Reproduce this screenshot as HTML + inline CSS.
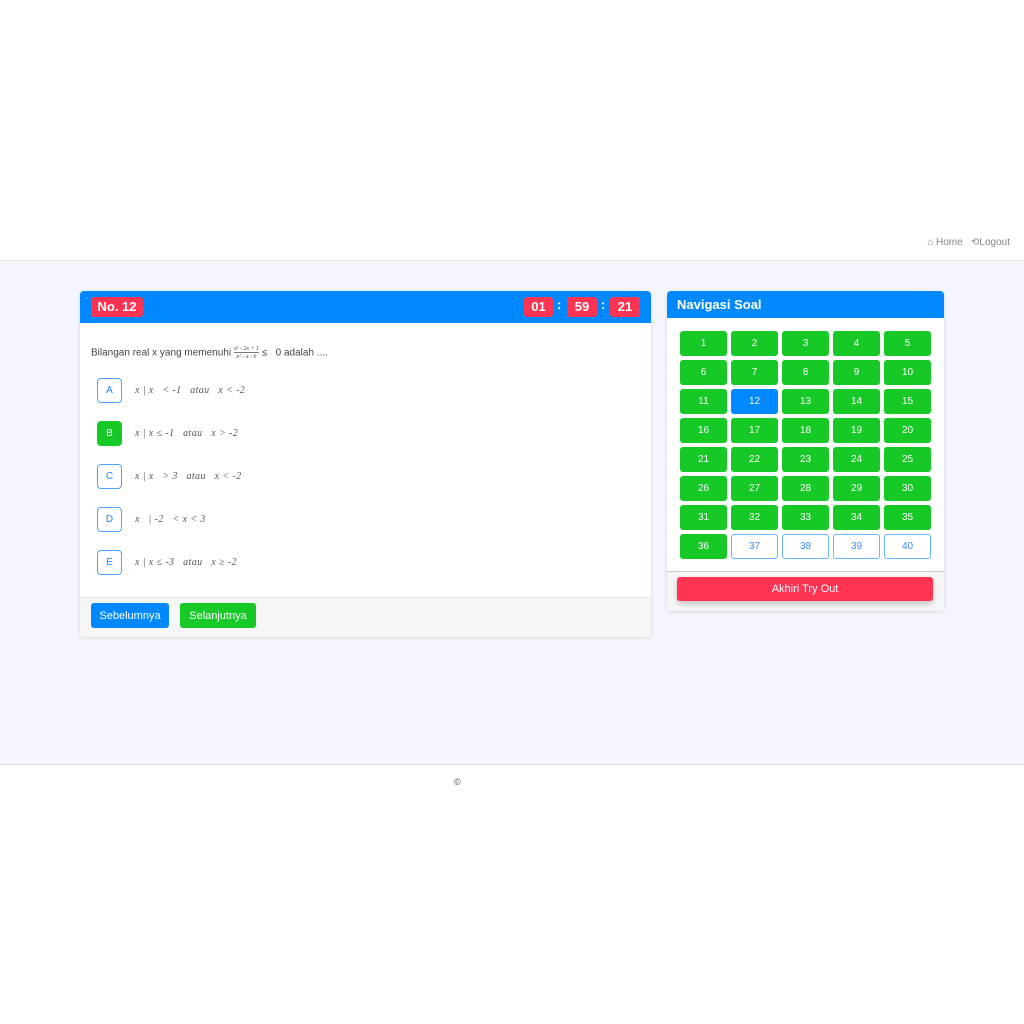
<!DOCTYPE html>
<html><head><meta charset="utf-8"><style>
*{box-sizing:border-box;margin:0;padding:0}
body{width:1024px;height:1024px;background:#fff;font-family:"Liberation Sans",sans-serif;position:relative;overflow:hidden}
.top{position:absolute;left:0;top:0;width:1024px;height:261px;background:#fff;border-bottom:1px solid #e3e3e8}
.nav{position:absolute;top:237px;right:14px;font-size:10px;color:#888}
.main{position:absolute;left:0;top:261px;width:1024px;height:504px;background:#f4f5fd;border-bottom:1px solid #dcdce0}
.card{position:absolute;background:#fff;border-radius:4px;box-shadow:0 1px 4px rgba(0,0,0,.12);overflow:hidden}
.hd{background:#0088ff;color:#fff;position:relative}
.red{background:#ff3352;color:#fff;font-weight:bold;border-radius:3px;position:absolute;text-align:center;font-size:13px}
.q{position:absolute;left:11px;top:54px;font-size:10px;color:#444}
.opt{position:absolute;left:17px;width:25px;height:25px;border:1px solid #4aa3ff;border-radius:4px;color:#1a86ff;font-size:10px;text-align:center;line-height:23px}
.ot{position:absolute;left:55px;font-family:"Liberation Serif",serif;font-style:italic;font-size:10px;color:#555;letter-spacing:.4px}
.btn{position:absolute;height:25px;border-radius:3px;color:#fff;font-size:11px;text-align:center;line-height:26px}
.g{position:absolute;width:47px;height:25px;border-radius:3px;background:#16c926;color:#fff;font-size:10px;text-align:center;line-height:26px}
.g.o{background:#fff;border:1px solid #6ab4ff;color:#3a8eff;line-height:24px}
.g.b{background:#0088ff}
</style></head><body>
<div class="top"><div class="nav">⌂ Home &nbsp; ⟲Logout</div></div>
<div class="main"></div>
<div class="card" style="left:80px;top:291px;width:571px;height:346px">
 <div class="hd" style="height:32px">
  <div class="red" style="left:11px;top:6px;width:52px;height:20px;line-height:20px">No. 12</div>
  <div class="red" style="left:444px;top:6px;width:29px;height:20px;line-height:20px">01</div>
  <div style="position:absolute;left:477px;top:6px;font-weight:bold;font-size:13px">:</div>
  <div class="red" style="left:487px;top:6px;width:30px;height:20px;line-height:20px">59</div>
  <div style="position:absolute;left:521px;top:6px;font-weight:bold;font-size:13px">:</div>
  <div class="red" style="left:530px;top:6px;width:30px;height:20px;line-height:20px">21</div>
 </div>
 <div class="q">Bilangan real x yang memenuhi <span style="display:inline-block;vertical-align:middle;font-family:'Liberation Serif',serif;font-size:6px;text-align:center;line-height:8px;font-style:italic"><span style="border-bottom:1px solid #777">x² - 2x + 1</span><br>x² - x - 6</span> ≤ &nbsp; 0 adalah ....</div>
 <div class="opt" style="top:87px">A</div><div class="ot" style="top:94px">x | x &nbsp; &lt; -1 &nbsp; atau &nbsp; x &lt; -2</div>
 <div class="opt" style="top:130px;background:#16c926;border-color:#16c926;color:#fff">B</div><div class="ot" style="top:137px">x | x ≤ -1 &nbsp; atau &nbsp; x &gt; -2</div>
 <div class="opt" style="top:173px">C</div><div class="ot" style="top:180px">x | x &nbsp; &gt; 3 &nbsp; atau &nbsp; x &lt; -2</div>
 <div class="opt" style="top:216px">D</div><div class="ot" style="top:223px">x &nbsp; | -2 &nbsp; &lt; x &lt; 3</div>
 <div class="opt" style="top:259px">E</div><div class="ot" style="top:266px">x | x ≤ -3 &nbsp; atau &nbsp; x ≥ -2</div>
 <div style="position:absolute;left:0;top:306px;width:571px;height:40px;background:#f6f6f6;border-top:1px solid #e6e6e6">
  <div class="btn" style="left:11px;top:5px;width:78px;background:#0088ff">Sebelumnya</div>
  <div class="btn" style="left:100px;top:5px;width:76px;background:#16c926">Selanjutnya</div>
 </div>
</div>
<div class="card" style="left:667px;top:291px;width:277px;height:320px">
 <div class="hd" style="height:27px;font-weight:bold;font-size:13px;line-height:27px;padding-left:10px">Navigasi Soal</div>
 <div id="grid"></div>
 <div style="position:absolute;left:0;top:280px;width:277px;height:40px;background:#f6f6f6;border-top:1px solid #ccc">
  <div class="btn" style="left:10px;top:5px;width:256px;height:24px;line-height:25px;background:#ff3352;box-shadow:0 3px 6px rgba(0,0,0,.2)">Akhiri Try Out</div>
 </div>
</div>
<div style="position:absolute;left:454px;top:777px;font-size:9px;color:#555">©</div>
<script>
var h='';for(var i=1;i<=40;i++){var r=Math.floor((i-1)/5),c=(i-1)%5;var cl=i==12?'g b':(i>36?'g o':'g');h+='<div class="'+cl+'" style="left:'+(13+c*51)+'px;top:'+(40+r*29)+'px">'+i+'</div>';}
document.getElementById('grid').innerHTML=h;
</script>
</body></html>
